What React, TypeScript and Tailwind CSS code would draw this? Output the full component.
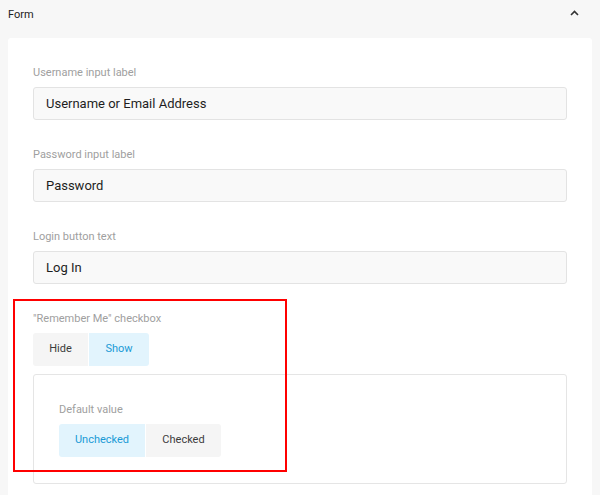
const font = { fontFamily: "Roboto, 'Liberation Sans', sans-serif" };

function Field({ label, value }: { label: string; value: string }) {
  return (
    <div className="flex flex-col">
      <div className="text-[11px] leading-[14px] text-[#a0a0a0]">{label}</div>
      <div className="mt-[7px] flex h-[33px] items-center rounded-[3px] border border-[#e3e3e3] bg-[#f9f9f9] px-3 text-[13px] text-[#1e1e1e]">
        {value}
      </div>
    </div>
  );
}

function Toggle({ items, active }: { items: { label: string; w: string }[]; active: number }) {
  return (
    <div className="mt-[7px] flex gap-[1px]">
      {items.map((it, i) => (
        <div
          key={it.label}
          className={`flex h-[33px] items-center justify-center text-[11px] ${it.w} ${
            i === 0 ? "rounded-l-[3px]" : ""
          } ${i === items.length - 1 ? "rounded-r-[3px]" : ""} ${
            i === active ? "bg-[#e2f4fd] text-[#1a9ad6]" : "bg-[#f5f5f5] text-[#3c3c3c]"
          }`}
        >
          {it.label}
        </div>
      ))}
    </div>
  );
}

export default function App() {
  return (
    <div className="relative h-[495px] w-[600px] overflow-hidden bg-[#f7f7f7]" style={font}>
      <div className="flex h-[38px] items-start justify-between px-2 pt-[7px]">
        <span className="text-[11px] text-[#222]">Form</span>
        <svg className="mr-[13px] mt-[3px]" width="9" height="6" viewBox="0 0 9 6">
          <path d="M1 5 L4.5 1.5 L8 5" fill="none" stroke="#333" strokeWidth="1.6" />
        </svg>
      </div>
      <div className="mx-2 flex flex-col gap-[28px] rounded-t-[3px] bg-white px-[25px] pt-[28px] pb-6">
        <Field label="Username input label" value="Username or Email Address" />
        <Field label="Password input label" value="Password" />
        <Field label="Login button text" value="Log In" />
        <div className="flex flex-col">
          <div className="text-[11px] leading-[14px] text-[#a0a0a0]">"Remember Me" checkbox</div>
          <Toggle items={[{ label: "Hide", w: "w-[55px]" }, { label: "Show", w: "w-[60px]" }]} active={1} />
          <div className="mt-2 h-[110px] rounded-[3px] border border-[#e5e5e5] px-[25px] pt-[28px]">
            <div className="text-[11px] leading-[14px] text-[#a0a0a0]">Default value</div>
            <Toggle
              items={[{ label: "Unchecked", w: "w-[86px]" }, { label: "Checked", w: "w-[75px]" }]}
              active={0}
            />
          </div>
        </div>
      </div>
      <div className="absolute left-[13px] top-[299px] h-[173px] w-[274px] border-2 border-[#ff0000]" />
    </div>
  );
}
